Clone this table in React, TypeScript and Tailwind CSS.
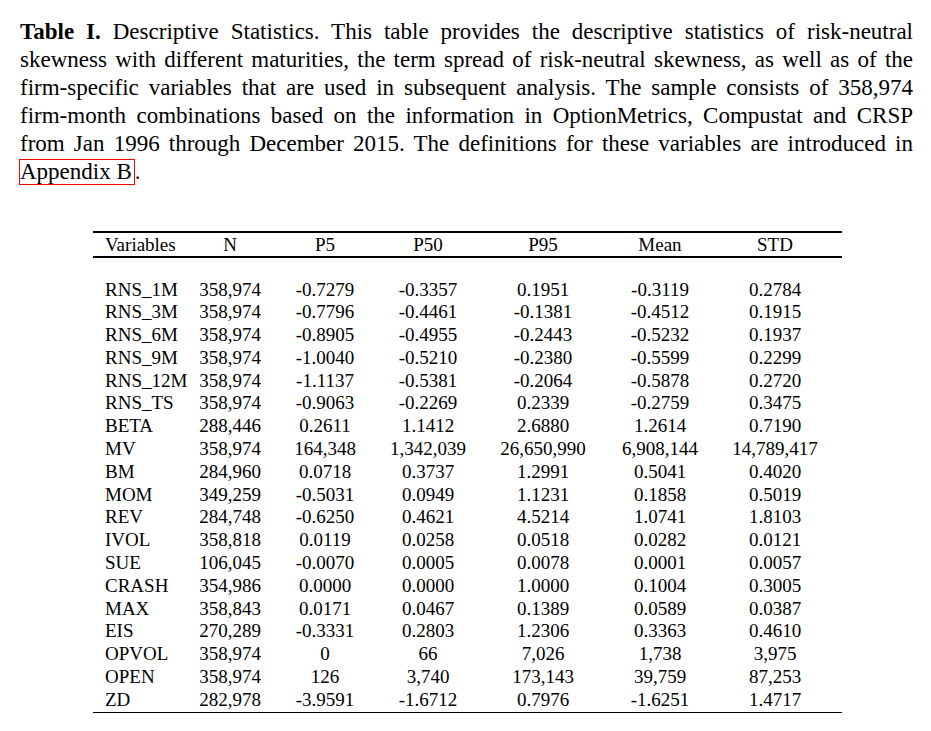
// Descriptive statistics table, typeset like a LaTeX page.

const CAPTION_LINES = [
  "Descriptive Statistics. This table provides the descriptive statistics of risk-neutral",
  "skewness with different maturities, the term spread of risk-neutral skewness, as well as of the",
  "firm-specific variables that are used in subsequent analysis. The sample consists of 358,974",
  "firm-month combinations based on the information in OptionMetrics, Compustat and CRSP",
  "from Jan 1996 through December 2015. The definitions for these variables are introduced in",
];

const HEADERS = ["Variables", "N", "P5", "P50", "P95", "Mean", "STD"];

const ROWS: string[][] = [
  ["RNS_1M", "358,974", "-0.7279", "-0.3357", "0.1951", "-0.3119", "0.2784"],
  ["RNS_3M", "358,974", "-0.7796", "-0.4461", "-0.1381", "-0.4512", "0.1915"],
  ["RNS_6M", "358,974", "-0.8905", "-0.4955", "-0.2443", "-0.5232", "0.1937"],
  ["RNS_9M", "358,974", "-1.0040", "-0.5210", "-0.2380", "-0.5599", "0.2299"],
  ["RNS_12M", "358,974", "-1.1137", "-0.5381", "-0.2064", "-0.5878", "0.2720"],
  ["RNS_TS", "358,974", "-0.9063", "-0.2269", "0.2339", "-0.2759", "0.3475"],
  ["BETA", "288,446", "0.2611", "1.1412", "2.6880", "1.2614", "0.7190"],
  ["MV", "358,974", "164,348", "1,342,039", "26,650,990", "6,908,144", "14,789,417"],
  ["BM", "284,960", "0.0718", "0.3737", "1.2991", "0.5041", "0.4020"],
  ["MOM", "349,259", "-0.5031", "0.0949", "1.1231", "0.1858", "0.5019"],
  ["REV", "284,748", "-0.6250", "0.4621", "4.5214", "1.0741", "1.8103"],
  ["IVOL", "358,818", "0.0119", "0.0258", "0.0518", "0.0282", "0.0121"],
  ["SUE", "106,045", "-0.0070", "0.0005", "0.0078", "0.0001", "0.0057"],
  ["CRASH", "354,986", "0.0000", "0.0000", "1.0000", "0.1004", "0.3005"],
  ["MAX", "358,843", "0.0171", "0.0467", "0.1389", "0.0589", "0.0387"],
  ["EIS", "270,289", "-0.3331", "0.2803", "1.2306", "0.3363", "0.4610"],
  ["OPVOL", "358,974", "0", "66", "7,026", "1,738", "3,975"],
  ["OPEN", "358,974", "126", "3,740", "173,143", "39,759", "87,253"],
  ["ZD", "282,978", "-3.9591", "-1.6712", "0.7976", "-1.6251", "1.4717"],
];

const GRID = "grid grid-cols-[99px_76px_114px_92px_138px_96px_134px]";

function Cells({ cells }: { cells: string[] }) {
  return (
    <>
      {cells.map((c, i) => (
        <div key={i} className={i === 0 ? "pl-[12px] text-left" : "text-center whitespace-nowrap"}>
          {c}
        </div>
      ))}
    </>
  );
}

export default function App() {
  return (
    <div
      className="min-h-[731px] w-[931px] bg-white text-black"
      style={{ fontFamily: '"Liberation Serif", "Times New Roman", serif' }}
    >
      {/* caption */}
      <div className="ml-[20px] w-[893px] pt-[18px] text-[23px] leading-[28px]">
        {CAPTION_LINES.map((line, i) => (
          <div key={i} className="text-justify [text-align-last:justify]">
            {i === 0 && <span className="font-bold">Table I. </span>}
            {line}
          </div>
        ))}
        <div>
          <span className="-ml-px inline-block h-[26px] border border-[#ff0000] pr-[2px] leading-[24px]">
            Appendix B
          </span>
          .
        </div>
      </div>

      {/* table */}
      <div className="ml-[93px] mt-[45px] w-[749px] text-[19px]">
        <div className="h-[2px] bg-black" />
        <div className={`${GRID} py-[1px] leading-[21px]`}>
          <Cells cells={HEADERS} />
        </div>
        <div className="h-[1.5px] bg-black" />
        <div className="h-[21px]" />
        <div className={`${GRID} leading-[22.8px]`}>
          {ROWS.map((r) => (
            <Cells key={r[0]} cells={r} />
          ))}
        </div>
        <div className="h-[1.5px] bg-black" />
      </div>
    </div>
  );
}
